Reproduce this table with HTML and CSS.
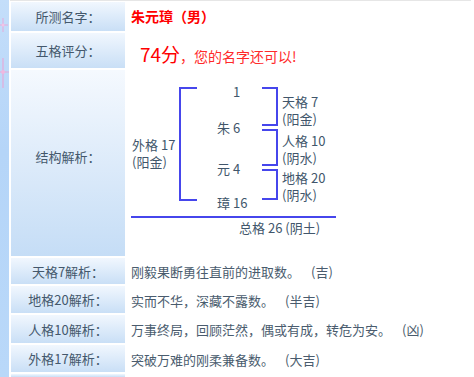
FILE: index.html
```html
<!DOCTYPE html>
<html lang="zh">
<head>
<meta charset="utf-8">
<title>姓名测试</title>
<link rel="stylesheet" href="styles.css">
</head>
<body>
<div class="page">
  <div class="strip">
    <svg class="sparkles" width="9" height="377" viewBox="0 0 9 377">
      <g stroke="#e9a6d8" stroke-width="1" fill="none" opacity="0.9">
        <path d="M3 18 V32 M-2 25 H8"/>
        <path d="M3 58 V88 M-4 72 H10" stroke-width="1.2"/>
      </g>
      <circle cx="3" cy="25" r="1.5" fill="#f3c3e6"/>
      <circle cx="3" cy="72" r="2" fill="#f0b8e0"/>
    </svg>
  </div>
  <div class="sheet">
    <div class="label">所测名字：</div>
    <div class="value name">朱元璋（男）</div>

    <div class="label">五格评分：</div>
    <div class="value score"><span class="big">74分</span><span class="remark">，您的名字还可以!</span></div>

    <div class="label tall">结构解析：</div>
    <div class="value diagram-cell">
      <div class="diagram">
        <svg class="lines" width="345" height="186" viewBox="0 0 345 186">
          <g stroke="#4646ec" stroke-width="2" fill="none">
            <path d="M72 18 H55 V130 H72"/>
            <path d="M137 18 H152 V55 H137"/>
            <path d="M137 60 H152 V95 H137"/>
            <path d="M137 100 H152 V129 H137"/>
            <path d="M6 147 H211"/>
          </g>
        </svg>
        <span class="t t-top">1</span>
        <span class="t t-c1">朱 6</span>
        <span class="t t-c2">元 4</span>
        <span class="t t-c3">璋 16</span>
        <div class="pair t-r1"><span>天格 7</span><span>(阳金)</span></div>
        <div class="pair t-r2"><span>人格 10</span><span>(阴水)</span></div>
        <div class="pair t-r3"><span>地格 20</span><span>(阴水)</span></div>
        <div class="pair t-left"><span>外格 17</span><span>(阳金)</span></div>
        <span class="t t-total">总格 26 (阴土)</span>
      </div>
    </div>

    <div class="label">天格7解析：</div>
    <div class="value desc">刚毅果断勇往直前的进取数。<span class="luck">(吉)</span></div>

    <div class="label">地格20解析：</div>
    <div class="value desc">实而不华，深藏不露数。<span class="luck">(半吉)</span></div>

    <div class="label">人格10解析：</div>
    <div class="value desc">万事终局，回顾茫然，偶或有成，转危为安。<span class="luck">(凶)</span></div>

    <div class="label">外格17解析：</div>
    <div class="value desc">突破万难的刚柔兼备数。<span class="luck">(大吉)</span></div>

    <div class="label"></div>
    <div class="value"></div>
  </div>
</div>
</body>
</html>
```
FILE: styles.css
```css
html, body {
  margin: 0;
  padding: 0;
  background: #ffffff;
}
body {
  font-family: "Noto Sans CJK SC", "Noto Sans", sans-serif;
  font-size: 13px;
  color: #44586c;
  width: 474px;
  height: 377px;
  overflow: hidden;
}
.page {
  display: flex;
  align-items: flex-start;
  height: 377px;
}
.strip {
  width: 9px;
  height: 377px;
  flex: none;
  background: linear-gradient(to bottom, #c4defa, #b5d5f8 40%, #b9d8f9);
  overflow: hidden;
}
.sparkles {
  display: block;
}
.sheet {
  margin-left: 1px;
  width: 460px;
  border-top: 1px solid #e6e6e6;
  padding: 1px 0 0 1px;
  display: grid;
  grid-template-columns: 114px 1fr;
  grid-template-rows: 29px 35px 186px 26px 27px 28px 27px 3px;
  row-gap: 2px;
}
.label {
  display: flex;
  align-items: center;
  justify-content: center;
  background: linear-gradient(to bottom, #f1f7fe, #c9dff6);
  color: #44586c;
  line-height: 17px;
  white-space: nowrap;
}
.label.tall {
  background: linear-gradient(to bottom, #f5f9fe, #c5ddf6);
  padding-bottom: 14px;
}
.value {
  display: flex;
  align-items: center;
  padding-left: 6px;
  line-height: 17px;
  white-space: nowrap;
}
.name {
  color: #ff0000;
  font-weight: bold;
  font-size: 14px;
}
.score {
  padding-left: 15px;
  color: #ff0000;
  align-items: baseline;
  padding-top: 9px;
}
.big {
  font-size: 19px;
  line-height: 24px;
}
.remark {
  font-size: 14px;
  color: #ff2a2a;
}
.desc {
  color: #4a5c6e;
  padding-top: 1px;
}
.luck {
  margin-left: 11px;
}
.diagram-cell {
  padding: 0;
  align-items: stretch;
}
.diagram {
  position: relative;
  width: 345px;
  height: 186px;
}
.lines {
  position: absolute;
  left: 0;
  top: 0;
}
.t {
  position: absolute;
  line-height: 17px;
  color: #41566b;
  white-space: nowrap;
}
.pair {
  position: absolute;
  display: flex;
  flex-direction: column;
  line-height: 17px;
  color: #41566b;
  white-space: nowrap;
}
.t-top { left: 108px; top: 13px; }
.t-c1 { left: 92px; top: 49px; }
.t-c2 { left: 92px; top: 90px; }
.t-c3 { left: 92px; top: 124px; }
.t-r1 { left: 157px; top: 23px; }
.t-r2 { left: 157px; top: 62px; }
.t-r3 { left: 157px; top: 99px; }
.t-left { left: 7px; top: 66px; }
.t-total { left: 114px; top: 149px; }
```
